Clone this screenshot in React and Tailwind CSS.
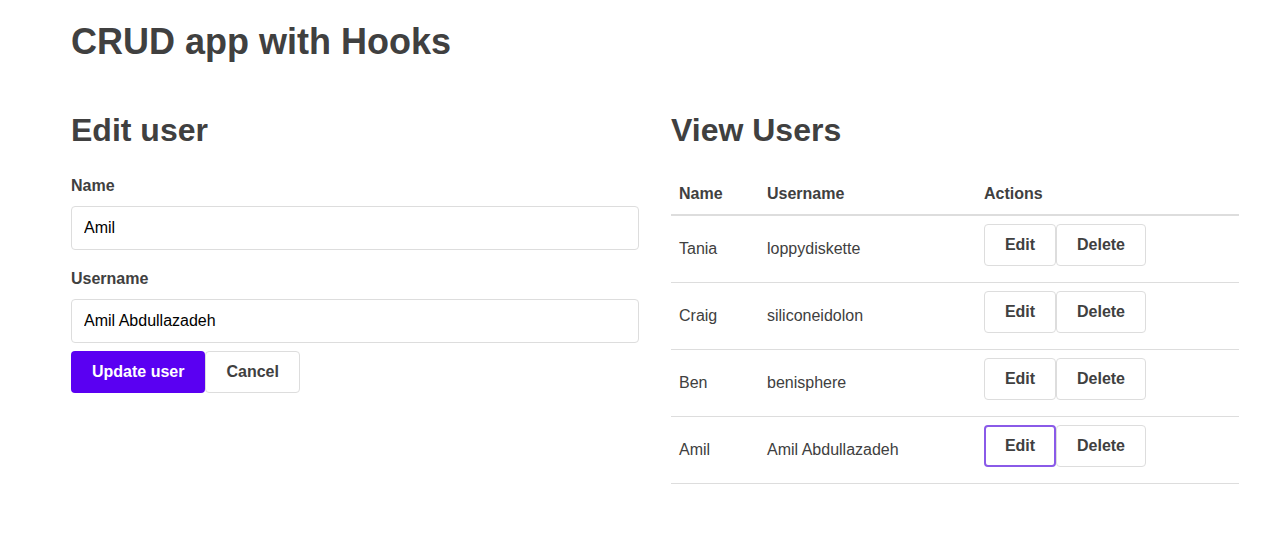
const users = [
  { id: 1, name: 'Tania', username: 'loppydiskette' },
  { id: 2, name: 'Craig', username: 'siliconeidolon' },
  { id: 3, name: 'Ben', username: 'benisphere' },
  { id: 4, name: 'Amil', username: 'Amil Abdullazadeh' },
]

const font = { fontFamily: '"Liberation Sans", Arial, sans-serif' }

export default function App() {
  return (
    <div className="min-h-[537px] bg-white text-[#404040]" style={font}>
      <div className="w-[1168px] ml-[71px] pt-[20px]">
        <h1 className="text-[36px] font-bold leading-[44px]">CRUD app with Hooks</h1>

        <div className="flex gap-[32px] mt-[46px]">
          {/* Edit form */}
          <div className="w-[568px]">
            <h2 className="text-[32px] font-bold leading-[40px]">Edit user</h2>
            <form className="mt-[26px]" onSubmit={e => e.preventDefault()}>
              <label className="block text-[16px] font-bold leading-[20px]">Name</label>
              <input
                type="text"
                defaultValue="Amil"
                className="block w-full h-[44px] mt-[10px] px-[12px] border border-[#dddddd] rounded-[4px] text-[16px] text-black outline-none"
              />
              <label className="block mt-[19px] text-[16px] font-bold leading-[20px]">Username</label>
              <input
                type="text"
                defaultValue="Amil Abdullazadeh"
                className="block w-full h-[44px] mt-[10px] px-[12px] border border-[#dddddd] rounded-[4px] text-[16px] text-black outline-none"
              />
              <div className="flex mt-[8px]">
                <button className="h-[42px] px-[21px] bg-[#5a00f2] text-white font-bold text-[16px] rounded-[4px]">
                  Update user
                </button>
                <button className="h-[42px] px-[20px] bg-white border border-[#dddddd] font-bold text-[16px] rounded-[4px]">
                  Cancel
                </button>
              </div>
            </form>
          </div>

          {/* Users table */}
          <div className="w-[568px]">
            <h2 className="text-[32px] font-bold leading-[40px]">View Users</h2>
            <table className="w-full mt-[32px] border-collapse text-[16px]">
              <thead>
                <tr className="border-b-2 border-[#dddddd]">
                  <th className="w-[88px] px-[8px] pb-[8px] text-left font-bold">Name</th>
                  <th className="w-[217px] px-[8px] pb-[8px] text-left font-bold">Username</th>
                  <th className="px-[8px] pb-[8px] text-left font-bold">Actions</th>
                </tr>
              </thead>
              <tbody>
                {users.map(user => (
                  <tr key={user.id} className="border-b border-[#dddddd]">
                    <td className="h-[67px] px-[8px]">{user.name}</td>
                    <td className="h-[67px] px-[8px]">{user.username}</td>
                    <td className="h-[67px] px-[8px]">
                      <div className="flex mb-[8px]">
                        <button
                          className={
                            user.id === 4
                              ? 'h-[42px] w-[72px] bg-white border-2 border-[#8a5ae8] font-bold rounded-[4px]'
                              : 'h-[42px] w-[72px] bg-white border border-[#dddddd] font-bold rounded-[4px]'
                          }
                        >
                          Edit
                        </button>
                        <button className="h-[42px] w-[90px] bg-white border border-[#dddddd] font-bold rounded-[4px]">
                          Delete
                        </button>
                      </div>
                    </td>
                  </tr>
                ))}
              </tbody>
            </table>
          </div>
        </div>
      </div>
    </div>
  )
}
